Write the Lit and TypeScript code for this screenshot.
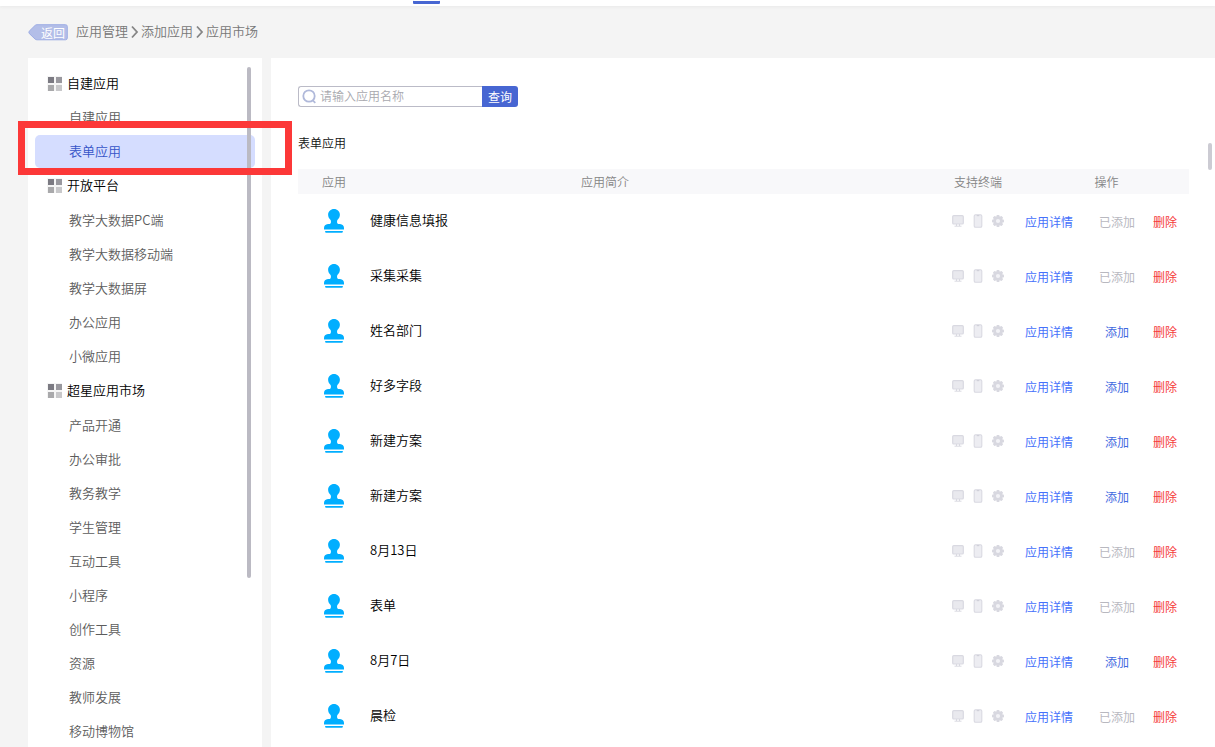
import { LitElement, html, css, svg } from "lit";
import { customElement, property, state } from "lit/decorators.js";
import { classMap } from "lit/directives/class-map.js";

interface Group {
  title: string;
  items: string[];
}

interface App {
  name: string;
  added: boolean;
}

const GROUPS: Group[] = [
  { title: "自建应用", items: ["自建应用", "表单应用"] },
  {
    title: "开放平台",
    items: ["教学大数据PC端", "教学大数据移动端", "教学大数据屏", "办公应用", "小微应用"],
  },
  {
    title: "超星应用市场",
    items: [
      "产品开通", "办公审批", "教务教学", "学生管理", "互动工具",
      "小程序", "创作工具", "资源", "教师发展", "移动博物馆",
    ],
  },
];

const APPS: App[] = [
  { name: "健康信息填报", added: true },
  { name: "采集采集", added: true },
  { name: "姓名部门", added: false },
  { name: "好多字段", added: false },
  { name: "新建方案", added: false },
  { name: "新建方案", added: false },
  { name: "8月13日", added: true },
  { name: "表单", added: true },
  { name: "8月7日", added: false },
  { name: "晨检", added: true },
];

const chevron = html`<svg class="chevron" width="13" height="14" viewBox="0 0 13 14" aria-hidden="true">
  <path d="M4 1.5 L9 7 L4 12.5" fill="none" stroke="#858585" stroke-width="1.8" />
</svg>`;

@customElement("app-breadcrumb")
class AppBreadcrumb extends LitElement {
  static styles = css`
    :host { display: block; }
    .bar { display: flex; align-items: center; gap: 8px; height: 16px; }
    .back {
      position: relative; width: 40px; height: 17px; padding: 0 0 0 13px; border: 0;
      background: none; color: #fff; font-family: inherit;
      font-size: 12px; line-height: 15px; font-weight: 400; text-align: left; white-space: nowrap;
    }
    .shape { position: absolute; left: 0; top: 0; }
    .label { position: relative; }
    .crumbs { display: flex; align-items: center; }
    .link { padding-bottom: 2px; color: #777; font-size: 13px; line-height: 16px; text-decoration: none; white-space: nowrap; }
    .chevron { display: block; }
  `;
  render() {
    return html`<nav class="bar" aria-label="面包屑">
      <button class="back" type="button">
        <svg class="shape" width="40" height="17" viewBox="0 0 40 17" aria-hidden="true">
          <path d="M9 .7 H37.5 Q39.3 .7 39.3 2.5 V14 Q39.3 15.8 37.5 15.8 H9 Q7.8 15.8 7 15 L1.2 9.4 Q.5 8.3 1.2 7.2 L7 1.5 Q7.8 .7 9 .7Z"
            fill="#b3bee8" stroke="#9eade4" />
        </svg>
        <span class="label">返回</span>
      </button>
      <div class="crumbs">
        <a class="link" href="#manage">应用管理</a>${chevron}
        <a class="link" href="#add">添加应用</a>${chevron}
        <a class="link" href="#market">应用市场</a>
      </div>
    </nav>`;
  }
}

@customElement("app-sidebar")
class AppSidebar extends LitElement {
  @state() active = "0-1";
  static styles = css`
    :host { display: block; position: relative; z-index: 1; background: #fff; }
    .side { padding: 9px 7px 0; font-size: 13px; line-height: 32px; }
    .title { display: flex; align-items: center; gap: 5px; margin: 0; padding: 0 0 2px 12px; color: #000; font-size: 13px; font-weight: inherit; }
    .group + .group .title { padding-bottom: 3px; }
    .list { margin: 0; padding: 0; list-style: none; }
    .item { position: relative; height: 34px; }
    .link { display: block; padding: 0 0 1px 34px; border-radius: 5px; color: #5c5c5c; text-decoration: none; }
    .active { background: #d5ddff; color: #3654c8; }
    .mark { position: absolute; z-index: 2; inset: -14px -37px -6px -17px; border: 7px solid #fc3838; pointer-events: none; }
    .thumb { position: absolute; z-index: 1; top: 9px; right: 11px; width: 4px; height: 511px; border-radius: 2px; background: #bbbac3; }
  `;
  render() {
    return html`<nav class="side" aria-label="应用分类">
        ${GROUPS.map((g, gi) => html`<section class="group">
          <h2 class="title">
            <svg width="15" height="15" viewBox="0 0 15 15" aria-hidden="true">
              <rect width="15" height="15" fill="#f5f5f5" />
              <rect x="1" y="1" width="6" height="6" fill="#7b7a82" />
              <rect x="9" y="1" width="6" height="6" fill="#99989e" />
              <rect x="1" y="9" width="6" height="6" fill="#a9a9ab" />
              <rect x="9" y="9" width="6" height="6" fill="#c8c8ca" />
            </svg>
            ${g.title}
          </h2>
          <ul class="list">
            ${g.items.map((name, i) => {
              const key = `${gi}-${i}`;
              const on = key === this.active;
              return html`<li class="item">
                <a class=${classMap({ link: true, active: on })} href="#${key}"
                  @click=${() => (this.active = key)}>${name}</a>
                ${on ? html`<span class="mark"></span>` : ""}
              </li>`;
            })}
          </ul>
        </section>`)}
      </nav>
      <span class="thumb"></span>`;
  }
}

const teeth = [0, 45, 90, 135, 180, 225, 270, 315];

@customElement("app-table")
class AppTable extends LitElement {
  @property({ attribute: false }) apps: App[] = [];
  static styles = css`
    :host { display: block; }
    .table { width: 100%; table-layout: fixed; border-collapse: collapse; font-size: 12px; }
    .th { height: 25px; padding: 0; background: #f8f8fa; color: #858585; font-weight: inherit; line-height: 24px; text-align: center; }
    .first { padding-left: 24px; text-align: left; }
    .intro { padding-left: 111px; text-align: left; }
    .c-icon { width: 72px; }
    .c-name { width: 100px; }
    .c-term { width: 92px; }
    .c-ops { width: 165px; }
    .td { height: 55px; padding: 0; box-sizing: border-box; white-space: nowrap; vertical-align: middle; }
    .pic { padding-bottom: 2px; }
    .name { padding-bottom: 4px; color: #000; font-size: 13px; }
    .stamp { display: block; margin: 0 auto; }
    .terms { display: flex; justify-content: center; gap: 8px; }
    .ops { display: flex; align-items: center; padding: 0 12px 0 1px; font-weight: 400; line-height: 18px; }
    .detail { color: #4671fb; text-decoration: none; }
    .btn { padding: 0; border: 0; background: none; font: inherit; }
    .add { width: 36px; margin: 0 18px 0 26px; color: #3f69df; }
    .add:disabled { color: #b8b8bf; }
    .del { color: #f53a3a; }
  `;
  stamp() {
    return html`<svg class="stamp" width="20" height="24" viewBox="0 0 20 24" fill="#00aeff" aria-hidden="true">
      <path d="M10 0C13.3 0 15.9 2.5 15.9 5.8C15.9 8 14.8 9.6 13.6 10.8C12.9 11.5 12.9 13.4 13.4 14.3C13.8 15 14.6 15 16 15.1C18.6 15.3 20 16.8 20 19V20.6H0V19C0 16.8 1.4 15.3 4 15.1C5.4 15 6.2 15 6.6 14.3C7.1 13.4 7.1 11.5 6.4 10.8C5.2 9.6 4.1 8 4.1 5.8C4.1 2.5 6.7 0 10 0Z" />
      <path d="M1 22H19L18.4 23.7H1.6Z" />
    </svg>`;
  }
  terminals() {
    return html`<div class="terms">
      <svg width="12" height="14" viewBox="0 0 12 14" aria-label="电脑">
        <rect x=".7" y="1.7" width="10.6" height="8.3" rx="1" fill="#e9e9ee" stroke="#d9d9e1" stroke-width="1.2" />
        <path d="M4.5 10V12M7.5 10V12M2.5 12.2H9.5" fill="none" stroke="#d9d9e1" stroke-width="1" />
      </svg>
      <svg width="12" height="14" viewBox="0 0 12 14" aria-label="手机">
        <rect x="2.2" y=".7" width="7.6" height="12.6" rx="1.3" fill="#ededf2" stroke="#d9d9e1" stroke-width="1.1" />
        <path d="M4.7 1.6H7.3" stroke="#d0d0d9" stroke-width="1.2" />
      </svg>
      <svg width="12" height="14" viewBox="0 0 12 14" aria-label="设置">
        ${teeth.map((a) => svg`<rect x="4.5" y="1" width="3" height="3" rx=".8" fill="#d8d8e0" transform="rotate(${a} 6 7)" />`)}
        <circle cx="6" cy="7" r="3.4" fill="#f2f2f6" stroke="#d8d8e0" stroke-width="2.6" />
      </svg>
    </div>`;
  }
  render() {
    return html`<table class="table">
      <colgroup>
        <col class="c-icon" /><col class="c-name" /><col /><col class="c-term" /><col class="c-ops" />
      </colgroup>
      <thead>
        <tr>
          <th class="th first" colspan="2">应用</th>
          <th class="th intro">应用简介</th>
          <th class="th">支持终端</th>
          <th class="th">操作</th>
        </tr>
      </thead>
      <tbody>
        ${this.apps.map((a) => html`<tr>
          <td class="td pic">${this.stamp()}</td>
          <td class="td name">${a.name}</td>
          <td class="td"></td>
          <td class="td pic">${this.terminals()}</td>
          <td class="td">
            <div class="ops">
              <a class="detail" href="#detail">应用详情</a>
              <button class="btn add" type="button" ?disabled=${a.added}>${a.added ? "已添加" : "添加"}</button>
              <button class="btn del" type="button">删除</button>
            </div>
          </td>
        </tr>`)}
      </tbody>
    </table>`;
  }
}

@customElement("app-root")
class AppRoot extends LitElement {
  static styles = css`
    :host {
      display: flex; flex-direction: column; height: 100vh; overflow: hidden; background: #f4f4f4;
      font-family: "Noto Sans CJK SC", "Noto Sans", sans-serif; font-weight: 350;
    }
    .top { flex: none; height: 6px; background: #fff; box-shadow: 0 1px 3px #e9e9e9; }
    .tab { display: block; width: 27px; height: 3px; margin-left: 34%; border-radius: 1px; background: #4766d2; border-top: 1px solid #fff; }
    .crumb { flex: none; padding: 18px 28px; }
    .body { display: grid; grid-template-columns: 234px minmax(0, 1fr); gap: 9px; flex: 1; min-height: 0; padding-left: 28px; }
    .main { position: relative; padding: 28px 26px 0 27px; background: #fff; }
    .search { display: flex; height: 21px; }
    .box { display: flex; align-items: center; gap: 3px; box-sizing: border-box; width: 184px; padding-left: 3px; border: 1px solid #bbbbc7; border-right: 0; border-radius: 3px 0 0 3px; }
    .glass { flex: none; }
    .input { flex: 1; min-width: 0; height: 17px; padding: 0 0 2px; box-sizing: border-box; border: 0; outline: 0; background: none; color: #333; font: inherit; font-size: 12px; line-height: 15px; }
    .input::placeholder { color: #a8a8ae; opacity: 1; }
    .go { width: 36px; padding: 0; border: 0; border-radius: 0 3px 3px 0; background: #4766d2; color: #fff; font: inherit; font-size: 12px; font-weight: 400; line-height: 20px; }
    .heading { margin: 25px 0 16px; color: #111; font-size: 12px; font-weight: inherit; line-height: 21px; }
    .thumb { position: absolute; top: 85px; right: 3px; width: 4px; height: 27px; border-radius: 2px; background: #cccbd3; }
  `;
  render() {
    return html`<header class="top"><span class="tab"></span></header>
      <app-breadcrumb class="crumb"></app-breadcrumb>
      <div class="body">
        <app-sidebar></app-sidebar>
        <main class="main">
          <form class="search" @submit=${(e: Event) => e.preventDefault()}>
            <label class="box">
              <svg class="glass" width="15" height="15" viewBox="0 0 15 15" fill="none" stroke="#b0b9da" stroke-width="1.8" aria-hidden="true">
                <circle cx="7" cy="7" r="5.7" />
                <path d="M10.5 11.2L13.3 13.8" />
              </svg>
              <input class="input" type="text" placeholder="请输入应用名称" aria-label="应用名称" />
            </label>
            <button class="go" type="submit">查询</button>
          </form>
          <h1 class="heading">表单应用</h1>
          <app-table .apps=${APPS}></app-table>
          <span class="thumb"></span>
        </main>
      </div>`;
  }
}
